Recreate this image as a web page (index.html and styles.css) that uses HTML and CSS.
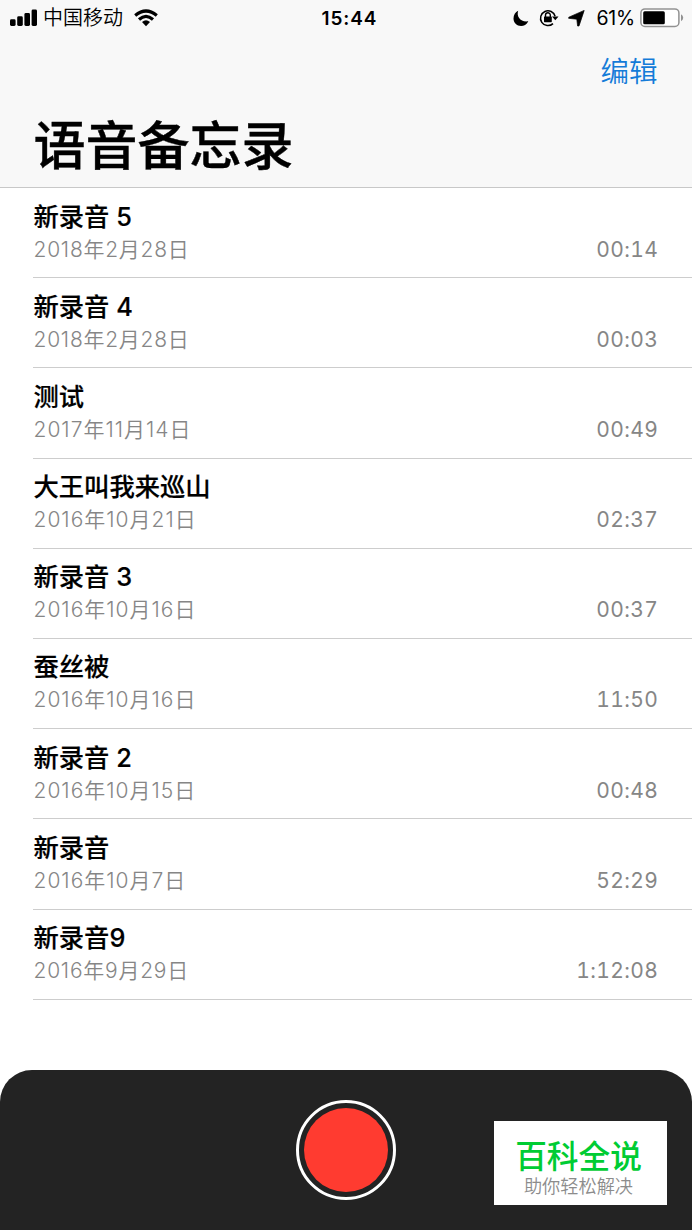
FILE: index.html
```html
<!DOCTYPE html>
<html lang="zh-CN">
<head>
<meta charset="utf-8">
<title>语音备忘录</title>
<link rel="stylesheet" href="styles.css">
</head>
<body>
<div class="phone">
  <header class="header">
    <div class="status">
      <div class="status-left">
        <svg class="signal" width="28" height="18" viewBox="0 0 28 18"><rect x="0" y="10.3" width="5.6" height="6.7" rx="1.4"/><rect x="7.2" y="7.3" width="5.6" height="9.7" rx="1.4"/><rect x="14.4" y="4" width="5.6" height="13" rx="1.4"/><rect x="21.6" y="0.5" width="5.4" height="16.5" rx="1.4"/></svg>
        <span class="carrier">中国移动</span>
        <svg class="wifi" width="24" height="18" viewBox="0 0 24 18"><g fill="none" stroke="#000" stroke-width="3.2"><path d="M1.2 6.4Q12-2.4 22.8 6.4"/><path d="M5 10.5Q12 4.4 19 10.5"/></g><path d="M8 13Q12 9.6 16 13L12 17.2Z"/></svg>
      </div>
      <div class="clock">15:44</div>
      <div class="status-right">
        <svg class="moon" width="16" height="17" viewBox="0 0 16 17"><path d="M5.2.8C3.2 6.7 7.5 12.4 15.3 11.3C13.6 14.7 10.9 16 8.1 16C3.7 16 .5 12.8.5 8.5C.5 5 2.3 2 5.2.8Z"/></svg>
        <svg class="lock" width="20" height="18" viewBox="0 0 20 18"><path d="M14 14.6A7.4 7.4 0 1 1 16.1 7.3" fill="none" stroke="#000" stroke-width="1.5"/><path d="M13 7.4H19.5L16.3 11.3Z"/><rect x="5" y="7.4" width="7.8" height="5.8" rx=".6"/><path d="M6.5 8V6.1a2.4 2.4 0 0 1 4.8 0V8" fill="none" stroke="#000" stroke-width="1.4"/></svg>
        <svg class="arrow" width="17" height="17" viewBox="0 0 17 17"><path d="M16.2.4L11 16L9.6 16L8.8 9.2L.6 8.3L.8 7.2Z" stroke="#000" stroke-width=".7" stroke-linejoin="round"/></svg>
        <span class="percent">61%</span>
        <svg class="battery" width="44" height="20" viewBox="0 0 44 20"><rect x=".9" y=".9" width="38" height="17.6" rx="4" fill="#fff" stroke="#929292" stroke-width="1.5"/><rect x="3.2" y="3.2" width="21.6" height="13" rx="1.5"/><path d="M41 6.2Q43.2 7.5 43.2 9.7T41 13.2Z" fill="#929292"/></svg>
      </div>
    </div>
    <div class="nav"><span class="edit">编辑</span></div>
    <h1 class="title">语音备忘录</h1>
  </header>
  <main class="list">
    <div class="row"><div class="name">新录音 5</div><div class="meta"><span class="date">2018年2月28日</span><span class="time">00:14</span></div></div>
    <div class="row"><div class="name">新录音 4</div><div class="meta"><span class="date">2018年2月28日</span><span class="time">00:03</span></div></div>
    <div class="row"><div class="name">测试</div><div class="meta"><span class="date date-long">2017年11月14日</span><span class="time">00:49</span></div></div>
    <div class="row"><div class="name">大王叫我来巡山</div><div class="meta"><span class="date date-long">2016年10月21日</span><span class="time">02:37</span></div></div>
    <div class="row"><div class="name">新录音 3</div><div class="meta"><span class="date date-long">2016年10月16日</span><span class="time">00:37</span></div></div>
    <div class="row"><div class="name">蚕丝被</div><div class="meta"><span class="date date-long">2016年10月16日</span><span class="time">11:50</span></div></div>
    <div class="row"><div class="name">新录音 2</div><div class="meta"><span class="date date-long">2016年10月15日</span><span class="time">00:48</span></div></div>
    <div class="row"><div class="name">新录音</div><div class="meta"><span class="date date-long">2016年10月7日</span><span class="time">52:29</span></div></div>
    <div class="row"><div class="name">新录音9</div><div class="meta"><span class="date">2016年9月29日</span><span class="time">1:12:08</span></div></div>
  </main>
  <footer class="recorder">
    <div class="record"><div class="record-dot"></div></div>
    <div class="badge"><div class="badge-title">百科全说</div><div class="badge-sub">助你轻松解决</div></div>
  </footer>
</div>
</body>
</html>
```
FILE: styles.css
```css
* { box-sizing: border-box; }
body {
  margin: 0;
  background: #fff;
  color: #000;
  font-family: Inter, "Noto Sans CJK SC", sans-serif;
}
svg { display: block; flex: none; }
.phone {
  width: 692px;
  height: 1230px;
  display: flex;
  flex-direction: column;
  overflow: hidden;
}
.header {
  height: 188px;
  flex: none;
  background: #f8f8f8;
  border-bottom: 1px solid #c8c8c8;
}
.status {
  height: 35px;
  display: grid;
  grid-template-columns: 1fr auto 1fr;
  align-items: center;
  padding: 0 8px 0 10px;
  font-size: 20px;
  line-height: 35px;
}
.status-left, .status-right { display: flex; align-items: center; }
.status-right { justify-content: flex-end; }
.signal, .wifi { margin-bottom: 1px; }
.carrier { margin-left: 5px; padding-top: 1px; font-weight: 350; }
.wifi { margin-left: 11px; }
.clock { font-size: 19px; font-weight: 600; letter-spacing: 0.9px; padding-left: 5px; }
.lock { margin-left: 10px; }
.arrow { margin-left: 9px; }
.percent { margin-left: 11px; padding-top: 1px; font-size: 19.5px; letter-spacing: -0.2px; }
.battery { margin-left: 5px; }
.nav {
  height: 74px;
  padding-right: 34.5px;
  text-align: right;
  line-height: 74px;
  font-size: 28.5px;
  font-weight: 350;
  color: #147bd8;
}
.title {
  margin: 0;
  padding-left: 33.5px;
  font-size: 52px;
  line-height: 76px;
  font-weight: 500;
  -webkit-text-stroke: 0.4px #000;
}
.list { height: 882px; flex: none; padding-left: 33px; }
.row {
  height: 90.2px;
  padding: 12.5px 34px 0 0.5px;
  border-bottom: 1px solid #cdcdcd;
}
.name { font-size: 25.3px; line-height: 32px; font-weight: 500; -webkit-text-stroke: 0.2px #000; }
.meta {
  display: flex;
  justify-content: space-between;
  font-size: 21px;
  line-height: 33px;
  color: #868686;
}
.date { letter-spacing: 0.75px; font-weight: 350; }
.date-long { letter-spacing: 1px; }
.time { letter-spacing: 0.4px; margin-right: -0.4px; font-weight: 370; font-variant-numeric: tabular-nums; }
.recorder {
  position: relative;
  height: 160px;
  flex: none;
  display: flex;
  justify-content: center;
  padding-top: 30px;
  background: #232323;
  border-radius: 32px 32px 0 0;
}
.record {
  width: 100px;
  height: 100px;
  padding: 5px;
  border: 3.5px solid #fff;
  border-radius: 50%;
}
.record-dot { height: 100%; border-radius: 50%; background: #ff3b30; }
.badge {
  position: absolute;
  right: 25px;
  top: 51px;
  width: 173px;
  height: 84px;
  padding: 18px 4px 0 0;
  background: #fff;
  text-align: center;
}
.badge-title { font-size: 31.7px; line-height: 36px; font-weight: 500; color: #0c3; }
.badge-sub { font-size: 18.2px; line-height: 22px; font-weight: 350; color: #8c8c8c; }
```
